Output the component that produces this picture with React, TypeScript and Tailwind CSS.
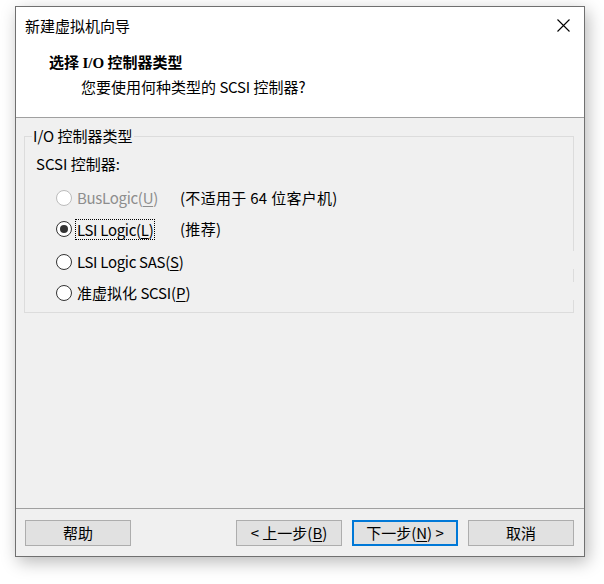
import React from "react";

const U = ({ children }: { children: React.ReactNode }) => (
  <span className="underline underline-offset-[2px] decoration-[1px]">{children}</span>
);

function Radio({ checked, disabled }: { checked?: boolean; disabled?: boolean }) {
  return (
    <span
      className={
        "w-[16px] h-[16px] rounded-full border flex items-center justify-center bg-white shrink-0 " +
        (disabled ? "border-[#bcbcbc]" : "border-[#333333]")
      }
    >
      {checked ? <span className="w-[8px] h-[8px] rounded-full bg-[#333333]" /> : null}
    </span>
  );
}

function Btn({ children, primary }: { children: React.ReactNode; primary?: boolean }) {
  return (
    <div
      className={
        "w-[106px] h-[26px] flex items-center justify-center bg-[#e1e1e1] text-[15px] leading-[20px] text-black " +
        (primary ? "border-2 border-[#0078d7]" : "border border-[#adadad]")
      }
    >
      {children}
    </div>
  );
}

export default function App() {
  return (
    <div
      className="w-[604px] h-[584px] bg-white pt-[6px] pl-[15px] text-black"
      style={{ fontFamily: '"Noto Sans CJK SC", "Noto Sans", sans-serif' }}
    >
      <div className="w-[570px] h-[551px] border border-[#707070] flex flex-col shadow-[3px_5px_16px_rgba(0,0,0,0.28)] bg-[#f0f0f0]">
        {/* header */}
        <div className="h-[111px] bg-white border-b border-[#a0a0a0] flex flex-col shrink-0">
          <div className="h-[37px] flex items-center justify-between pl-[9px] pr-[14px]">
            <span className="text-[15px] leading-[20px]">新建虚拟机向导</span>
            <svg width="13" height="13" viewBox="0 0 13 13">
              <path d="M0.5 0.5 L12.5 12.5 M12.5 0.5 L0.5 12.5" stroke="#000" strokeWidth="1.1" fill="none" />
            </svg>
          </div>
          <div className="ml-[33px] mt-[8px] text-[15px] leading-[20px] font-bold">
            选择 <span style={{ fontFamily: '"Liberation Serif", serif' }}>I/O</span> 控制器类型
          </div>
          <div className="ml-[65px] mt-[4px] text-[15px] leading-[20px]">
            您要使用何种类型的 <span className="tracking-[-0.2px]">SCSI</span> 控制器?
          </div>
        </div>

        {/* body */}
        <div className="h-[390px] shrink-0 flex flex-col">
          <div className="mt-[18px] ml-[8px] mr-[10px] flex h-[177px]">
            <div className="flex-1 border-l border-t border-b border-[#dcdcdc] flex flex-col">
              <div className="-mt-[11px] ml-[7px] px-[1px] w-fit bg-[#f0f0f0] text-[15px] leading-[20px]">
                I/O 控制器类型
              </div>
              <div className="ml-[11px] mt-[8px] text-[15px] leading-[20px]">SCSI 控制器:</div>

              <div className="mt-[14px] ml-[31px] flex items-center h-[20px] text-[15px] leading-[20px]">
                <Radio disabled />
                <span className="w-[108px] pl-[5px] text-[#8d8d8d] tracking-[-0.3px]">
                  BusLogic(<U>U</U>)
                </span>
                <span className="tracking-[0.3px]">(不适用于 64 位客户机)</span>
              </div>

              <div className="mt-[11px] ml-[31px] flex items-center h-[20px] text-[15px] leading-[20px]">
                <Radio checked />
                <span className="w-[108px] pl-[3px] flex">
                  <span className="border border-dotted border-black px-[1px] leading-[19px] tracking-[-0.3px]">
                    LSI Logic(<U>L</U>)
                  </span>
                </span>
                <span className="tracking-[0.3px]">(推荐)</span>
              </div>

              <div className="mt-[13px] ml-[31px] flex items-center h-[20px] text-[15px] leading-[20px]">
                <Radio />
                <span className="pl-[5px] tracking-[-0.3px]">
                  LSI Logic SAS(<U>S</U>)
                </span>
              </div>

              <div className="mt-[11px] ml-[31px] flex items-center h-[20px] text-[15px] leading-[20px]">
                <Radio />
                <span className="pl-[5px]">
                  准虚拟化 <span className="tracking-[-0.2px]">SCSI</span>(<U>P</U>)
                </span>
              </div>
            </div>
            <div className="w-px self-stretch bg-[linear-gradient(to_bottom,#dcdcdc_0px,#dcdcdc_115px,transparent_115px,transparent_133px,#dcdcdc_133px,#dcdcdc_146px,transparent_146px,transparent_164px,#dcdcdc_164px)]" />
          </div>
        </div>

        {/* footer */}
        <div className="border-t border-[#a0a0a0] pt-[11px] pb-[10px] pl-[9px] pr-[10px] flex items-start">
          <Btn>帮助</Btn>
          <div className="flex-1" />
          <div className="flex gap-[10px]">
            <Btn>
              &lt; 上一步(<U>B</U>)
            </Btn>
            <Btn primary>
              下一步(<U>N</U>) &gt;
            </Btn>
            <Btn>取消</Btn>
          </div>
        </div>
      </div>
    </div>
  );
}
